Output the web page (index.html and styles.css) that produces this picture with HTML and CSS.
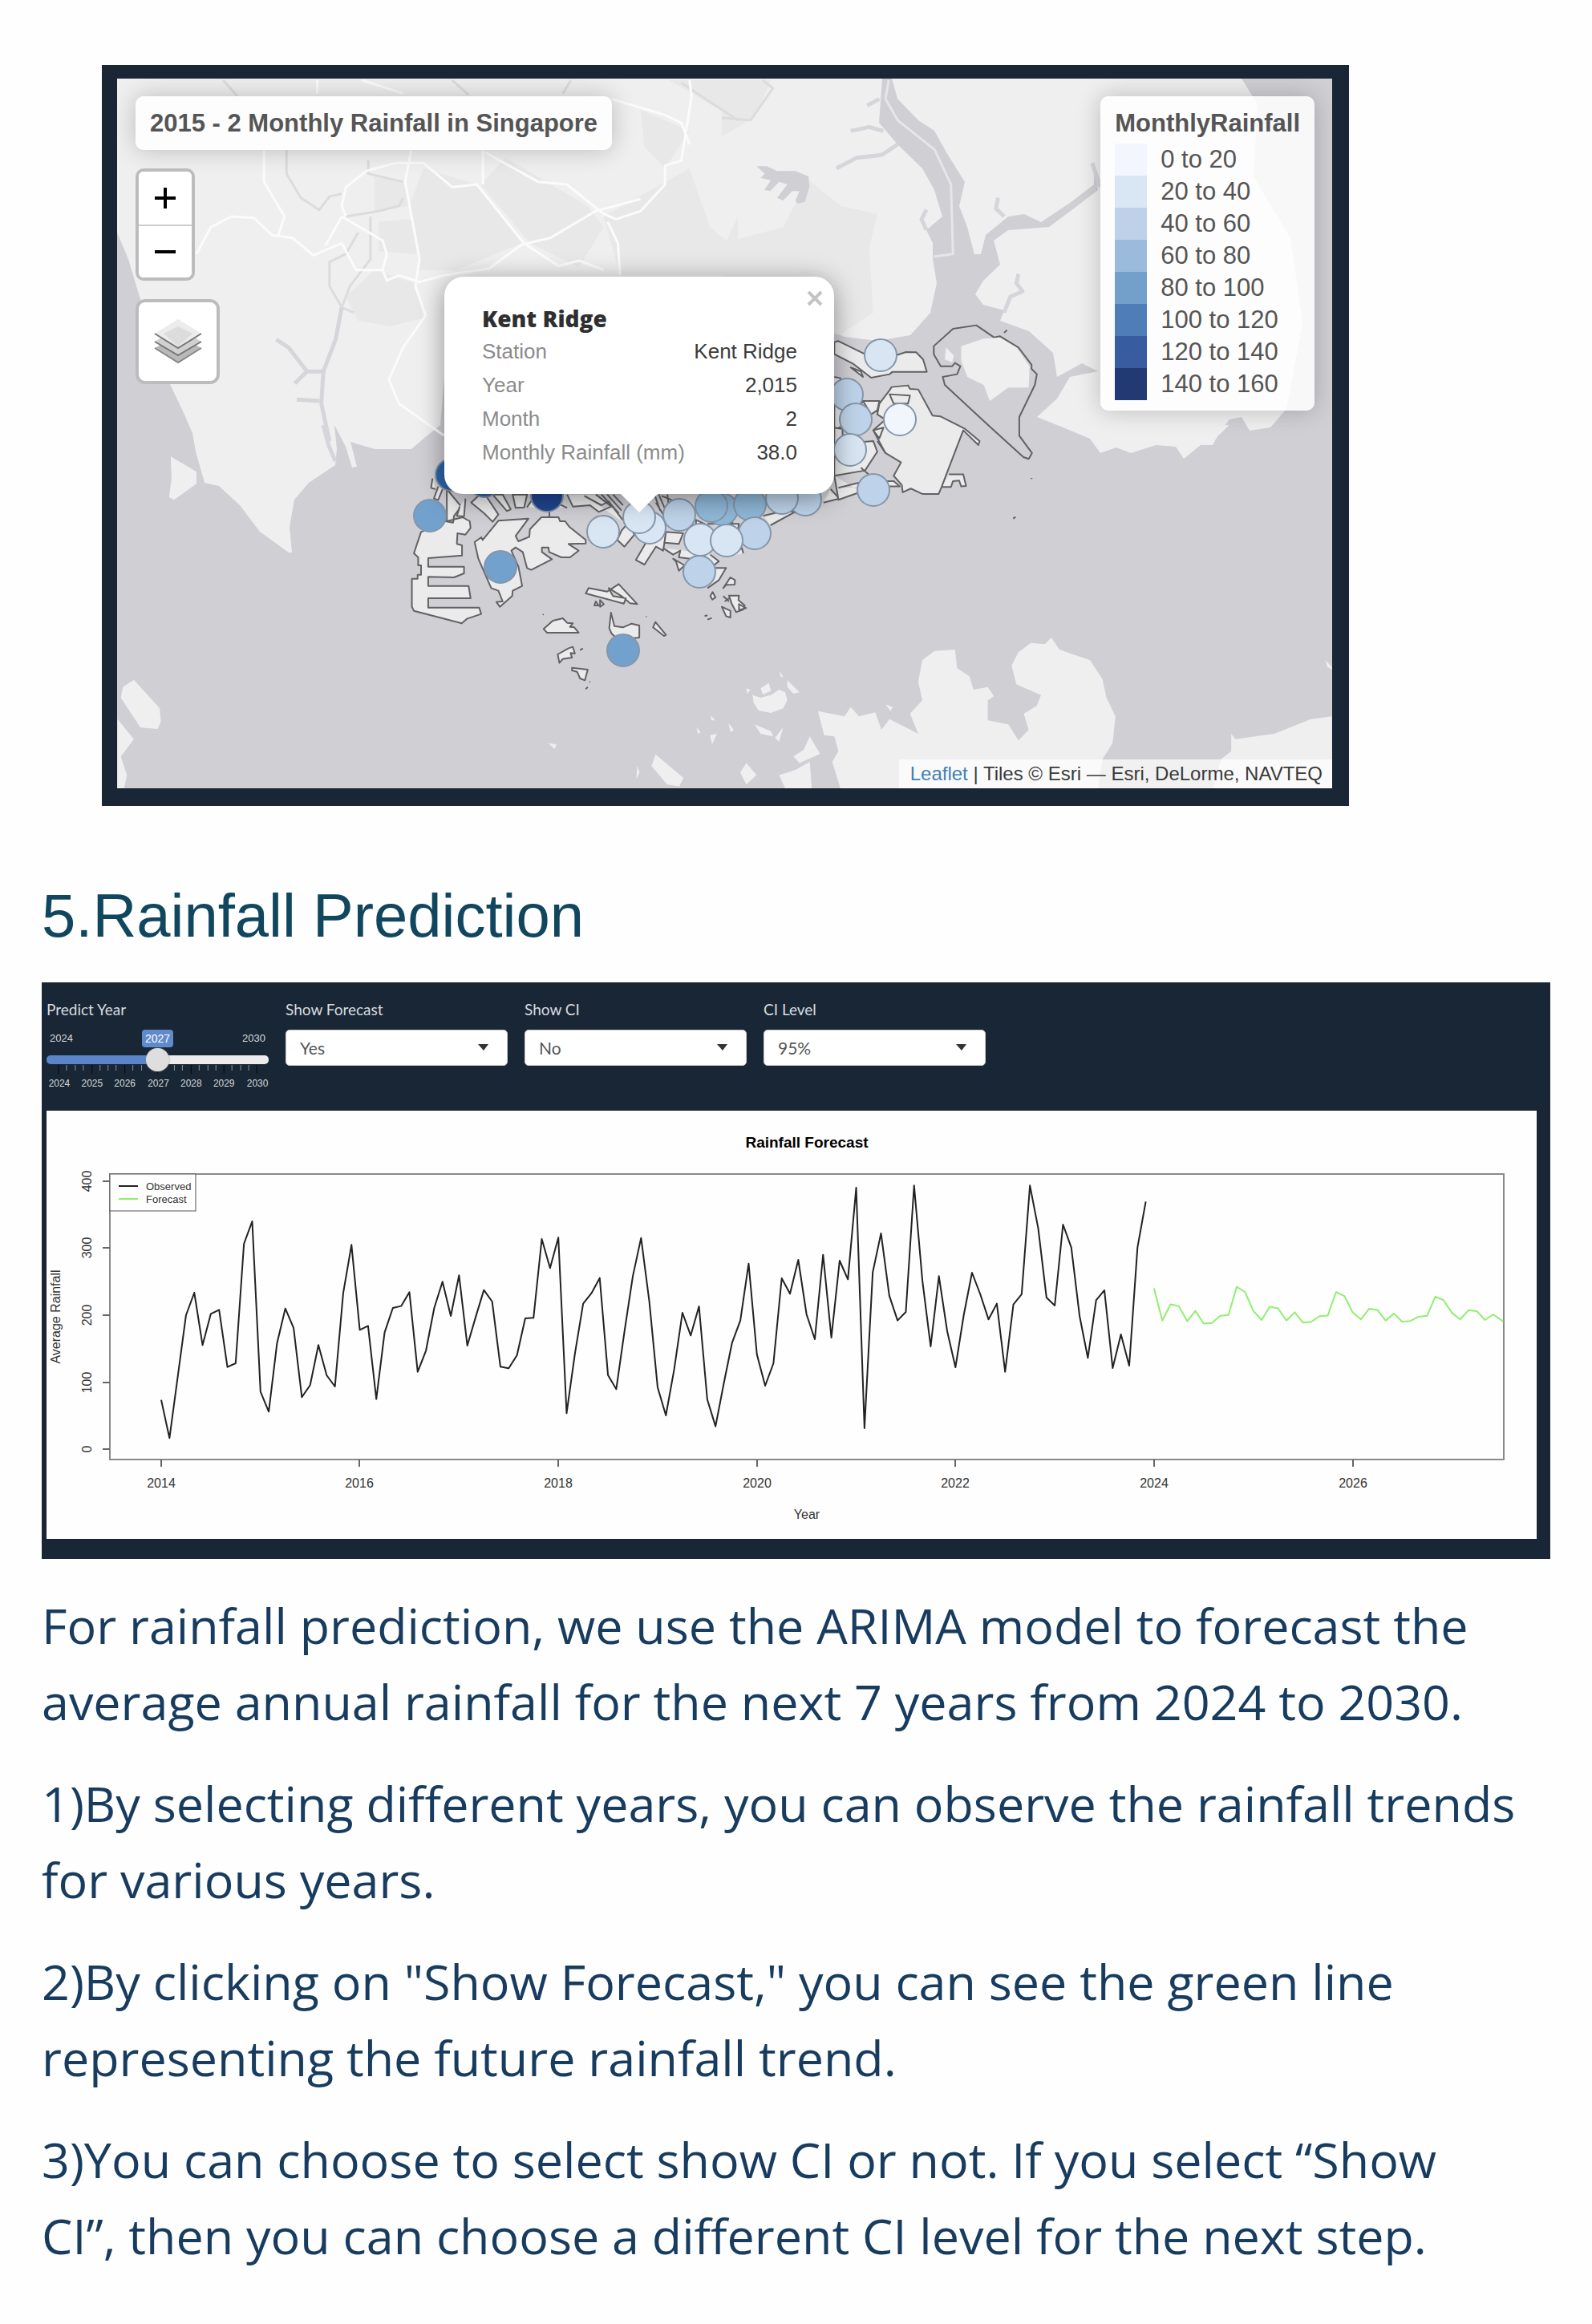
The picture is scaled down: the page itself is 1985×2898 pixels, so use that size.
FILE: index.html
```html
<!DOCTYPE html>
<html lang="en">
<head>
<meta charset="utf-8">
<meta name="viewport" content="width=device-width, initial-scale=1">
<title>Rainfall Prediction</title>
<link rel="stylesheet" href="styles.css">
</head>
<body>
<main class="page">
  <section class="map-frame" aria-label="Monthly rainfall map">
    <div class="map">
      <svg class="map-canvas" viewBox="146 98 1515 885" role="img" aria-label="Map of Singapore with rainfall stations">
        <rect class="sea" x="146" y="98" width="1515" height="885"/>
        <!-- Malay peninsula and Johor -->
        <path class="land" d="M146 98H1100L1096 153 1119 180 1150 210 1165 237 1175 270 1155 287 1163 303 1163 323 1168 353 1160 390 1135 418 1094 425 1053 420 1000 400 560 400 549 530 528 547 513 560 467 560 437 551 445 582 439 583 431 557 417 530 420 560 418 580 385 602 367 623 361 657 364 689 360 689 324 663 299 630 273 606 255 602 244 563 240 540 230 517 211 477 174 370 160 323 146 290Z"/>
        <path class="land" d="M1112 98L1119 123 1145 150 1165 163 1180 190 1203 227 1196 257 1206 283 1215 317 1223 317 1229 293 1257 270 1277 267 1298 277 1334 253 1364 230 1364 200 1369 237 1339 260 1308 283 1257 287 1239 300 1247 330 1226 350 1216 367 1226 380 1252 387 1247 400 1283 413 1313 440 1318 470 1349 453 1369 463 1334 470 1318 497 1293 520 1323 532 1359 547 1372 565 1392 558 1410 565 1441 555 1466 557 1476 572 1497 555 1512 555 1520 540 1533 523 1548 520 1558 537 1584 533 1604 510 1624 403 1609 297 1563 220 1568 130 1548 98Z"/>
        <!-- urban shading -->
        <g class="shade" transform="translate(120 70) scale(.5102 .3333)">
          <path d="M680 450L750 470 770 560 680 580ZM690 620L760 610 850 660 780 740 690 730ZM610 900L680 800 780 850 800 980 720 1010 640 990ZM800 420L930 480 1040 700 880 800 790 800 765 560ZM1000 380L1200 560 1240 640 1180 790 1060 700 940 480ZM1330 200L1450 280 1390 420 1340 340ZM1240 600L1450 420 1500 640 1540 690 1568 600V820H1280ZM1400 90L1568 240V90Z"/>
        </g>
        <g class="shade" transform="translate(900 70) scale(.5102 .3333)">
          <path d="M0 700L150 640 210 460 290 560 380 590 360 720 370 960 290 1040H0ZM0 90H120L80 230 0 300Z"/>
        </g>
        <!-- rivers -->
        <g class="river" transform="translate(120 70) scale(.5102 .3333)">
          <path d="M310 90L345 150M870 90L910 145M1160 90L1140 140M1430 100L1568 240M465 350V440L500 530 545 575 570 525 600 515M610 600L690 580 740 560 750 530M665 390V440L750 470M640 660L610 740 570 770V860L600 940 630 960M670 600V760L620 860 600 940"/>
          <path class="river-wide" d="M600 940L585 1060 555 1180 550 1300 570 1440M555 1180H515L470 1090 440 1060M545 1290L490 1285M515 1180L485 1225"/>
        </g>
        <g class="river" transform="translate(900 70) scale(.5102 .3333)">
          <path class="river-wide" d="M430 330L390 370 330 380 280 420M395 280L360 265 315 280M385 160L355 185M905 400L925 490M690 600L670 570 675 530M500 650L488 610 500 575M690 960L705 900 735 880 720 850 725 815"/>
          <path d="M0 230L70 240 125 120 100 90"/>
        </g>
        <g class="sea" transform="translate(900 70) scale(.5102 .3333)">
          <path d="M85 412L110 412 135 430 180 430 212 450 214 490 203 545 185 552 180 540 190 505 172 505 150 540 135 530 160 480 140 470 118 505 104 500 120 465 95 455 105 440Z"/>
        </g>
        <g class="shore" transform="translate(900 70) scale(.5102 .3333)">
          <path d="M408 90L400 160 430 240 520 350 560 480 565 740 518 750"/>
        </g>
        <path class="river-wide" d="M403 530L410 556 418 575"/>
        <!-- highways -->
        <g class="road" transform="translate(120 70) scale(.5102 .3333)">
          <path d="M540 90V140M410 350V470L460 600 445 670M245 740L280 640 330 600 385 605 430 670 480 680 530 745 600 700 635 800 700 800 710 840 740 820 790 845 850 820 960 795 1040 705 1110 680 1220 580 1330 535M610 600L600 560 610 490 660 430 730 400 800 400 870 490 930 480 1045 700 1130 785 1180 765 1240 800M770 350L755 470 790 760 780 860 805 970 750 1090 715 1210 740 1300 850 1420M600 600L560 710M600 600L700 690 710 740 700 800M945 350V480M950 360L1080 470 1150 480 1240 590 1270 610 1330 580 1390 480V410L1430 390 1455 150 1450 90M1260 160L1390 220 1430 250 1450 330M1250 620L1275 700 1280 820M650 90L750 140"/>
        </g>
        <!-- small islands and Riau coast -->
        <g class="land" transform="translate(120 530) scale(.5102 .3333)">
          <path d="M182 118L245 175V220L190 280 178 270 184 200ZM92 953L155 1060 158 1110 150 1137 108 1132 60 1020 65 980ZM52 1100L92 1175 60 1240 75 1310 68 1360H52ZM1367 1232L1435 1320 1425 1352 1395 1345 1357 1275ZM1105 1190L1125 1195 1120 1212ZM1500 1160L1517 1155 1505 1195ZM1467 1130L1477 1150 1470 1155ZM1545 1115L1558 1140 1550 1150ZM1502 1085L1512 1105H1503ZM1322 1275L1328 1300 1320 1325Z"/>
        </g>
        <g class="land" transform="translate(900 530) scale(.5102 .3333)">
          <path d="M235 1070L300 1090 315 1055 335 1090 375 1075 390 1140 410 1100 480 1155 460 1080 490 1030 480 960 490 880 520 845 570 840 575 910 605 940 615 990 650 980 665 1015 650 1030V1105L700 1120 725 1180 750 1140 738 1080 770 1050 780 1010 720 970 708 900 725 850 755 815 790 820 805 795 825 840 900 880 930 950 940 1020 962 1090 955 1190 930 1250 920 1360H290L270 1260 285 1220 275 1165 250 1160ZM1220 1250L1245 1220V1155L1255 1175 1350 1155 1440 1100 1491 1090V1360H1200ZM1475 880L1491 905V915L1480 905ZM75 1010L95 1020 120 1010 140 990 155 1000 160 1030 150 1060 120 1077 90 1068 78 1040ZM95 985L115 965 120 995 100 1008ZM160 955L190 1000 175 1005 160 980ZM140 920L150 940 145 945ZM60 985L70 990 62 1005ZM80 1120L120 1145 125 1165 95 1155ZM150 1130L140 1185 130 1170ZM215 1165L240 1230 190 1265 175 1240 200 1215ZM140 1310L180 1290 215 1260 220 1360H155ZM60 1265L85 1310 60 1345 45 1300ZM400 1045L418 1055 412 1070Z"/>
          <path d="M830 0H1240L1200 60 1000 70 900 30Z"/>
        </g>
        <!-- planning area outlines, west and south -->
        <g class="area" transform="translate(500 590) scale(.35714 .33333)">
          <path d="M160 60L210 125 185 160 182 185 155 180 70 220 45 300 60 315V345H70V380H58V395H38V500L45 515 212 562 230 545 280 527 273 503H95V468H243L236 422H95V388L185 390 220 375V350H95V318L213 308V270L195 265 197 225 225 230 243 205 240 180 215 165 160 180Z"/>
          <path d="M110 20L105 55 120 60M130 50L115 95 130 100 145 60M205 125L195 160 220 162 225 95M245 110L280 75 300 90 340 155 320 182 290 150Z"/>
          <path d="M320 80L370 142 383 135 355 80ZM390 80L400 130 430 128 440 80ZM440 128L470 80 560 120 580 130"/>
          <path d="M340 178L445 170 400 235 410 255 448 238 450 210 490 165H550L555 180H573L587 200 645 250V263L585 265 620 290 590 315H560L517 295 515 278H492V295L527 322 455 362 440 355 425 295 400 278 385 290 410 350 423 422 390 440 388 460 345 500 333 482 355 480 340 440 315 430 270 320 257 258 280 240 285 250Z"/>
          <path d="M518 120V165M580 80L600 125 660 120 690 145 735 125 680 80M640 85L700 120 725 105 770 170 790 190 770 215 755 250 780 275 815 230 800 200"/>
          <path d="M700 80L760 150M720 80L770 140M740 80L775 120M855 260L820 325 850 342 890 275 915 290 925 225M885 80L905 140M900 80L920 130M930 80L935 125M890 110L930 180M910 85L945 100"/>
          <path d="M925 220L985 225 970 265 920 260ZM915 280L950 305 975 290 970 315 1010 320 1060 300M950 320L990 345 970 365 960 330ZM1080 305L1110 330 1085 350 1060 310M1085 355H1135L1110 400 1070 430"/>
          <path d="M1030 175L1060 190 1030 195ZM1070 190H1180L1175 215M1110 195L1120 180 1160 185M1265 160L1340 140 1375 145 1290 195M1150 310L1190 280 1195 300M1500 60L1530 95 1475 110M1365 140L1380 150"/>
          <path d="M655 430L720 443 760 415 825 490 800 487 770 460 725 430 740 460 785 468 778 488 645 450ZM680 480L675 495 690 495ZM695 475L708 490 695 500Z"/>
          <path d="M498 583L530 552 565 543 580 560 600 562 590 575 605 577 620 597H510ZM733 522L745 572 775 577 805 563 832 570V615L760 625 735 600 727 580ZM888 557L925 605 918 609 880 577ZM1088 445L1098 465 1087 473 1080 460ZM1150 390L1166 400 1165 417 1135 418 1125 430ZM1120 500L1150 515V540L1135 535ZM1145 458H1180L1178 475 1200 495 1195 510 1170 520 1155 490ZM1125 460L1145 480M1130 480L1150 465M1180 490L1205 505 1180 512Z"/>
          <path d="M547 678L585 655 600 650 607 675 592 673 597 690 565 695 553 710ZM597 728L652 735 642 775 625 768 615 743 597 738ZM625 662L635 656M645 808L652 800M495 530L498 528M855 536L857 538M658 780L660 782M1060 535L1070 532M1070 548L1085 542"/>
        </g>
        <!-- planning area outlines, east -->
        <g class="area" transform="translate(900 70) scale(.5102 .3333)">
          <path d="M275 1070L285 1066 350 1115 425 1120 450 1107 475 1108 492 1135 501 1181H417L410 1190 365 1203 320 1150 275 1115ZM315 1165L340 1180 345 1200ZM275 1200L290 1205V1250L275 1280"/>
          <path d="M275 1270L340 1290 385 1290 380 1325 365 1340 345 1290 310 1370 275 1400ZM385 1300L410 1250 415 1238 455 1232 460 1245 480 1247 515 1345 535 1348 593 1393 630 1440 627 1455 590 1400 550 1560 537 1612 530 1638H490L462 1618 442 1632 440 1605 420 1570 438 1520 400 1485 370 1400 400 1360 380 1340ZM410 1265L460 1270 455 1300H420ZM370 1400L395 1390 385 1430ZM555 1565H590L597 1608 585 1610 580 1588 565 1590 560 1612H538"/>
          <path d="M275 1390L295 1395V1450L370 1440 380 1480 350 1550 275 1570ZM340 1540L370 1580M400 1485L380 1440M275 1570L285 1660 340 1630M285 1615L350 1590 420 1590 435 1610 400 1610"/>
          <path class="bare" d="M565 1020L622 1007 665 1052 680 1048 725 1090 757 1155V1170L770 1190 765 1230 727 1350V1420L758 1485 750 1507 737 1500 640 1365 545 1230 540 1200 575 1190 583 1160 570 1148 563 1160H535L518 1115V1085ZM690 1035L697 1025M757 1578V1582M712 1730L718 1724"/>
        </g>
        <g class="land" transform="translate(900 70) scale(.5102 .3333)">
          <path d="M585 1085L640 1057 680 1053 720 1090 752 1160 750 1240 700 1240 655 1290 640 1230 600 1200 585 1140ZM548 1090L567 1120 563 1145 545 1135Z"/>
        </g>
        <!-- rainfall stations -->
        <g class="station">
          <circle class="r100" cx="563" cy="592" r="20"/>
          <circle class="r100" cx="604" cy="600" r="20"/>
          <circle class="r140" cx="682" cy="618" r="20"/>
          <circle class="r80" cx="536" cy="643" r="20"/>
          <circle class="r80" cx="624" cy="707" r="20"/>
          <circle class="r80" cx="777" cy="811" r="20"/>
          <circle class="r20" cx="752" cy="663" r="20"/>
          <circle class="r20" cx="810" cy="658" r="20"/>
          <circle class="r20" cx="797" cy="645" r="20"/>
          <circle class="r40" cx="847" cy="642" r="20"/>
          <circle class="r60" cx="900" cy="635" r="20"/>
          <circle class="r60" cx="887" cy="631" r="20"/>
          <circle class="r60" cx="935" cy="629" r="20"/>
          <circle class="r40" cx="1004" cy="623" r="20"/>
          <circle class="r40" cx="975" cy="621" r="20"/>
          <circle class="r40" cx="941" cy="665" r="20"/>
          <circle class="r20" cx="873" cy="673" r="20"/>
          <circle class="r20" cx="906" cy="674" r="20"/>
          <circle class="r40" cx="872" cy="713" r="20"/>
          <circle class="r20" cx="1098" cy="443" r="20"/>
          <circle class="r40" cx="1056" cy="492" r="20"/>
          <circle class="r40" cx="1067" cy="523" r="20"/>
          <circle class="r20" cx="1060" cy="561" r="20"/>
          <circle class="r0" cx="1122" cy="523" r="20"/>
          <circle class="r40" cx="1089" cy="611" r="20"/>
        </g>
      </svg>

      <div class="map-left">
        <div class="map-card map-title">2015 - 2 Monthly Rainfall in Singapore</div>
        <div class="zoom-control">
          <button type="button" class="zoom-button" aria-label="Zoom in"><svg width="26" height="26" viewBox="0 0 26 26"><path d="M13 0V26M0 13H26" stroke="#000" stroke-width="4"/></svg></button>
          <button type="button" class="zoom-button" aria-label="Zoom out"><svg width="26" height="26" viewBox="0 0 26 26"><path d="M0 13H26" stroke="#000" stroke-width="4"/></svg></button>
        </div>
        <button type="button" class="layers-button" aria-label="Layers">
          <svg width="60" height="56" viewBox="0 0 60 56">
            <path d="M1 36L30 55 59 36 30 20Z" fill="#b9b9b9"/><path d="M1 36L30 54 59 36" fill="none" stroke="#888" stroke-width="2"/>
            <path d="M1 28L30 46 59 28 30 10Z" fill="#d0d0d0"/><path d="M1 28L30 45 59 28" fill="none" stroke="#777" stroke-width="2"/>
            <path d="M1 18L30 37 59 18 30 0Z" fill="#ececec"/><path d="M12 18L30 34 48 18 30 9Z" fill="#dcdcdc"/><path d="M1 18L30 36 59 18" fill="none" stroke="#777" stroke-width="2"/>
          </svg>
        </button>
      </div>

      <div class="map-card legend">
        <div class="legend-title">MonthlyRainfall</div>
        <ul class="legend-list">
          <li><i class="swatch s0"></i>0 to 20</li>
          <li><i class="swatch s20"></i>20 to 40</li>
          <li><i class="swatch s40"></i>40 to 60</li>
          <li><i class="swatch s60"></i>60 to 80</li>
          <li><i class="swatch s80"></i>80 to 100</li>
          <li><i class="swatch s100"></i>100 to 120</li>
          <li><i class="swatch s120"></i>120 to 140</li>
          <li><i class="swatch s140"></i>140 to 160</li>
        </ul>
      </div>

      <div class="popup">
        <button type="button" class="popup-close" aria-label="Close"><svg width="20" height="20" viewBox="0 0 20 20"><path d="M2 2L18 18M18 2L2 18" stroke="#c3c3c3" stroke-width="4"/></svg></button>
        <table class="popup-table">
          <caption>Kent Ridge</caption>
          <tr><th scope="row">Station</th><td>Kent Ridge</td></tr>
          <tr><th scope="row">Year</th><td>2,015</td></tr>
          <tr><th scope="row">Month</th><td>2</td></tr>
          <tr><th scope="row">Monthly Rainfall (mm)</th><td>38.0</td></tr>
        </table>
      </div>

      <div class="attribution"><a href="https://leafletjs.com">Leaflet</a> | Tiles © Esri — Esri, DeLorme, NAVTEQ</div>
    </div>
  </section>

  <h2 class="heading">5.Rainfall Prediction</h2>

  <section class="forecast" aria-label="Rainfall forecast">
    <form class="controls">
      <div class="field">
        <label for="year">Predict Year</label>
        <div class="slider">
          <div class="slider-values"><span>2024</span><output class="slider-bubble" for="year">2027</output><span>2030</span></div>
          <input type="range" id="year" min="2024" max="2030" value="2027">
          <svg class="slider-scale" viewBox="0 0 278 30">
            <path class="minor" d="M25 0V7M36 0V7M46 0V7M67 0V7M77 0V7M87 0V7M108 0V7M119 0V7M160 0V7M170 0V7M191 0V7M202 0V7M212 0V7M232 0V7M243 0V7M253 0V7"/>
            <path class="major" d="M15 0V11M57 0V11M98 0V11M139 0V11M181 0V11M222 0V11M263 0V11"/>
            <text x="16" y="27">2024</text><text x="57" y="27">2025</text><text x="98" y="27">2026</text><text x="140" y="27">2027</text><text x="181" y="27">2028</text><text x="222" y="27">2029</text><text x="264" y="27">2030</text>
          </svg>
        </div>
      </div>
      <div class="field">
        <label for="forecast">Show Forecast</label>
        <div class="select"><select id="forecast"><option>Yes</option><option>No</option></select><svg class="caret" viewBox="0 0 13 8"><path d="M0 0H13L7 8Z"/></svg></div>
      </div>
      <div class="field">
        <label for="ci">Show CI</label>
        <div class="select"><select id="ci"><option>No</option><option>Yes</option></select><svg class="caret" viewBox="0 0 13 8"><path d="M0 0H13L7 8Z"/></svg></div>
      </div>
      <div class="field">
        <label for="level">CI Level</label>
        <div class="select"><select id="level"><option>95%</option><option>80%</option></select><svg class="caret" viewBox="0 0 13 8"><path d="M0 0H13L7 8Z"/></svg></div>
      </div>
    </form>

    <svg class="chart" viewBox="58 1385 1858 534" role="img" aria-label="Rainfall Forecast">
      <text class="chart-title" x="1006" y="1431">Rainfall Forecast</text>
      <rect class="plot" x="137" y="1464" width="1738" height="356"/>
      <path class="axis" d="M128 1473H137M128 1556H137M128 1640H137M128 1724H137M128 1807H137M201 1820V1829M448 1820V1829M696 1820V1829M944 1820V1829M1191 1820V1829M1439 1820V1829M1687 1820V1829"/>
      <g class="axis-text">
        <text x="201" y="1855">2014</text><text x="448" y="1855">2016</text><text x="696" y="1855">2018</text><text x="944" y="1855">2020</text><text x="1191" y="1855">2022</text><text x="1439" y="1855">2024</text><text x="1687" y="1855">2026</text>
        <text x="1006" y="1894">Year</text>
        <text transform="translate(114 1807) rotate(-90)">0</text>
        <text transform="translate(114 1724) rotate(-90)">100</text>
        <text transform="translate(114 1640) rotate(-90)">200</text>
        <text transform="translate(114 1556) rotate(-90)">300</text>
        <text transform="translate(114 1473) rotate(-90)">400</text>
        <text transform="translate(75 1642) rotate(-90)">Average Rainfall</text>
      </g>
      <!-- one x unit per month -->
      <g transform="translate(201 1440) scale(10.316 .3333)">
        <polyline class="observed" points="0,917 1,1060 2,830 3,600 4,516 5,712 6,595 7,580 8,794 9,780 10,333 11,249 12,886 13,961 14,705 15,575 16,648 17,907 18,862 19,712 20,825 21,867 22,517 23,337 24,655 25,640 26,914 27,665 28,573 29,566 30,514 31,812 32,733 33,573 34,475 35,603 36,451 37,714 38,608 39,506 40,549 41,793 42,799 43,750 44,612 45,610 46,315 47,424 48,310 49,967 50,745 51,557 52,518 53,461 54,824 55,877 56,660 57,455 58,311 59,550 60,870 61,975 62,803 63,591 64,676 65,567 66,915 67,1016 68,855 69,703 70,620 71,407 72,747 73,864 74,780 75,462 76,520 77,393 78,597 79,690 80,374 81,684 82,396 83,466 84,123 85,1023 86,440 87,294 88,527 89,620 90,588 91,115 92,470 93,717 94,454 95,660 96,795 97,600 98,441 99,522 100,616 101,557 102,812 103,560 104,522 105,115 106,275 107,534 108,564 109,261 110,347 111,603 112,760 113,544 114,507 115,798 116,672 117,789 118,347 119,175"/>
      </g>
      <g transform="translate(201 1380) scale(10.316 .37)">
        <polyline class="predicted" points="120,612 121,721 122,666 123,672 124,723 125,688 126,731 127,729 128,705 129,702 130,607 131,625 132,688 133,719 134,674 135,680 136,721 137,693 138,728 139,725 140,706 141,704 142,625 143,638 144,693 145,717 146,681 147,685 148,721 149,697 150,725 151,722 152,708 153,705 154,640 155,652 156,695 157,717 158,686 159,689 160,719 161,700 162.2,724"/>
      </g>
      <rect class="key" x="137" y="1464" width="107" height="46"/>
      <path class="observed" d="M148 1479H172"/><path class="predicted" d="M148 1495H172"/>
      <text class="key-text" x="182" y="1484">Observed</text><text class="key-text" x="182" y="1500">Forecast</text>
    </svg>
  </section>

  <div class="prose">
    <p>For rainfall prediction, we use the ARIMA model to forecast the average annual rainfall for the next 7 years from 2024 to 2030.</p>
    <p>1)By selecting different years, you can observe the rainfall trends for various years.</p>
    <p>2)By clicking on "Show Forecast," you can see the green line representing the future rainfall trend.</p>
    <p>3)You can choose to select show CI or not. If you select “Show CI”, then you can choose a different CI level for the next step.</p>
  </div>
</main>
</body>
</html>
```
FILE: styles.css
```css
* { box-sizing: border-box; }

body {
  margin: 0;
  background: #fefefe;
  font-family: "Liberation Sans", Arial, sans-serif;
}

svg { display: block; }
button { cursor: pointer; padding: 0; }

.page { padding: 81px 52px 32px; }

/* Map */
.map-frame {
  margin: 0 251px 0 75px;
  padding: 17px 21px 22px 19px;
  background: #182635;
}
.map { position: relative; overflow: hidden; }
.map-canvas { width: 100%; height: auto; }
.sea { fill: #d0cfd4; }
.land { fill: #efeff0; }
.shade { fill: #e8e8e9; }
.river path, .river-wide, .road path, .area path, .shore path { vector-effect: non-scaling-stroke; }
.river, .river-wide { fill: none; stroke: #dcdcdf; stroke-width: 3; }
.river .river-wide, .river-wide { stroke: #d6d5d9; stroke-width: 5; stroke-linejoin: round; }
.shore { fill: none; stroke: #e6e6e8; stroke-width: 3; }
.road { fill: none; stroke: #fbfbfb; stroke-width: 3; stroke-linejoin: round; }
.area { fill: #ebebec; stroke: #626264; stroke-width: 2; stroke-linejoin: round; }
.area .bare { fill: none; }
.station { stroke: #8496aa; stroke-width: 2; }
.r0 { fill: #f1f5fc; }
.r20 { fill: #d8e6f4; }
.r40 { fill: #bed3e9; }
.r60 { fill: #8fb8d8; }
.r80 { fill: #73a1cd; }
.r100 { fill: #2f64a9; }
.r140 { fill: #214590; }

.map-left {
  position: absolute;
  left: 23px;
  top: 22px;
  display: flex;
  flex-direction: column;
  align-items: flex-start;
  gap: 23px;
}
.map-card {
  border-radius: 10px;
  background: rgba(255, 255, 255, .85);
  box-shadow: 0 0 30px rgba(0, 0, 0, .22);
  color: #555;
  font-size: 31px;
}
.map-title {
  padding: 14px 18px;
  font-weight: 700;
  line-height: 39px;
}
.zoom-control {
  border: 4px solid #bcbcbe;
  border-radius: 10px;
  background: #fff;
  overflow: hidden;
}
.zoom-button {
  display: grid;
  place-items: center;
  width: 66px;
  height: 66px;
  border: 0;
  background: #fff;
}
.zoom-button + .zoom-button { border-top: 2px solid #ccc; }
.layers-button {
  display: grid;
  place-items: center;
  width: 105px;
  height: 106px;
  border: 4px solid #bcbcbe;
  border-radius: 12px;
  background: #fff;
}

.legend {
  position: absolute;
  right: 22px;
  top: 22px;
  padding: 16px 18px 13px;
}
.legend-title { font-weight: 700; line-height: 36px; margin-bottom: 7px; }
.legend-list { margin: 0; padding: 0; list-style: none; }
.legend-list li { display: flex; align-items: center; gap: 17px; height: 40px; line-height: 40px; }
.swatch { width: 40px; height: 40px; }
.s0 { background: #f3f7fd; }
.s20 { background: #d9e6f3; }
.s40 { background: #bfd1e8; }
.s60 { background: #9abbdb; }
.s80 { background: #739fcb; }
.s100 { background: #4f7db8; }
.s120 { background: #385c9f; }
.s140 { background: #233973; }

.popup {
  position: absolute;
  left: 408px;
  top: 247px;
  width: 486px;
  padding: 35px 46px 31px 47px;
  border-radius: 24px;
  background: #fff;
  box-shadow: 0 5px 32px rgba(0, 0, 0, .4);
}
.popup::after {
  content: "";
  position: absolute;
  left: 220px;
  top: 100%;
  border: 23px solid transparent;
  border-top-color: #fff;
  border-bottom: 0;
}
.popup-close {
  position: absolute;
  right: 14px;
  top: 17px;
  border: 0;
  background: none;
}
.popup-table {
  width: 100%;
  border-collapse: collapse;
  font-size: 26px;
  line-height: 42px;
}
.popup-table caption {
  height: 37px;
  color: #2f2f2f;
  font-family: "Open Sans", sans-serif;
  font-size: 28px;
  font-weight: 800;
  line-height: 34px;
  text-align: left;
}
.popup-table th { padding: 0; color: #8b8b8b; font-weight: 400; text-align: left; }
.popup-table td { padding: 0; color: #3c3c3c; text-align: right; }

.attribution {
  position: absolute;
  right: 0;
  bottom: 0;
  padding: 0 12px 0 14px;
  background: rgba(255, 255, 255, .7);
  color: #3a3a3a;
  font-size: 24px;
  line-height: 36px;
}
.attribution a { color: #3f80b5; text-decoration: none; }

.heading {
  margin: 95px 0 41px;
  color: #10465e;
  font-size: 76px;
  font-weight: 400;
  line-height: 84px;
}

/* Forecast panel */
.forecast { padding: 0 17px 25px 6px; background: #182635; }
.controls {
  display: grid;
  grid-template-columns: repeat(4, 277px);
  gap: 21px;
  min-height: 160px;
  padding-top: 22px;
  font-family: Lato, sans-serif;
}
.field { display: flex; flex-direction: column; gap: 13px; }
.field label { color: #d8dbde; font-size: 19px; line-height: 24px; }
.select { position: relative; }
.select select {
  width: 100%;
  height: 45px;
  padding: 0 17px;
  border: 1px solid #ccc;
  border-radius: 5px;
  appearance: none;
  background: #fff;
  color: #555;
  font: 21px Lato, sans-serif;
}
.caret { position: absolute; right: 24px; top: 18px; width: 13px; height: 8px; fill: #333; pointer-events: none; }

.slider { font-family: "Liberation Sans", Arial, sans-serif; color: #d8dbde; }
.slider-values {
  display: flex;
  justify-content: space-between;
  padding: 0 4px;
  font-size: 13px;
  line-height: 22px;
}
.slider-bubble { padding: 0 4px; border-radius: 4px; background: #5f8bcb; color: #fff; font-size: 14px; }
.slider input {
  position: relative;
  z-index: 1;
  display: block;
  width: 100%;
  height: 29px;
  margin: 1px 0 0;
  appearance: none;
  background: none;
}
.slider input::-webkit-slider-runnable-track {
  height: 11px;
  border-radius: 5px;
  background: linear-gradient(90deg, #5a85c8 50%, #ececec 50%);
}
.slider input::-webkit-slider-thumb {
  appearance: none;
  width: 29px;
  height: 29px;
  margin-top: -9px;
  border-radius: 50%;
  background: #dedede;
  box-shadow: 0 0 2px #888;
}
.slider-scale { width: 100%; margin-top: -8px; overflow: visible; }
.slider-scale text { fill: #d8dbde; font-size: 12px; text-anchor: middle; }
.minor { stroke: #8c949c; stroke-width: 1; }
.major { stroke: #05080c; stroke-width: 1; }

.chart { width: 100%; height: auto; background: #fefefe; font-family: "Liberation Sans", Arial, sans-serif; }
.chart-title { font-size: 19px; font-weight: 700; text-anchor: middle; }
.plot { fill: none; stroke: #8a8a8a; stroke-width: 2; }
.axis { fill: none; stroke: #666; stroke-width: 2; }
.axis-text { fill: #333; font-size: 16px; text-anchor: middle; }
.observed, .predicted { fill: none; stroke-width: 2; vector-effect: non-scaling-stroke; stroke-linejoin: round; }
.observed { stroke: #222; }
.predicted { stroke: #90ee70; }
.key { fill: #fefefe; stroke: #555; stroke-width: 1; }
.key-text { fill: #333; font-size: 13px; }

.prose {
  padding: 35px 40px 0 0;
  color: #173c5f;
  font-family: "Open Sans", sans-serif;
  font-size: 61px;
  line-height: 95px;
}
.prose p { margin: 0 0 32px; }
```
